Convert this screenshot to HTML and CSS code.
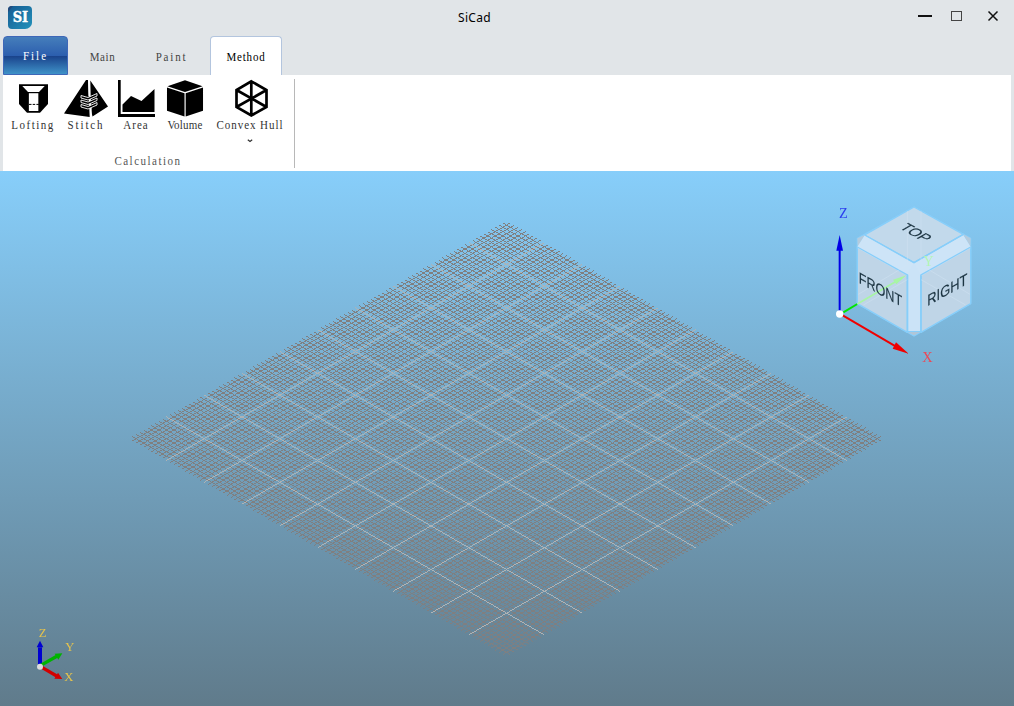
FILE: index.html
```html
<!DOCTYPE html>
<html lang="en">
<head>
<meta charset="utf-8">
<title>SiCad</title>
<link rel="stylesheet" href="styles.css">
</head>
<body>
<div class="window">
  <header class="titlebar">
    <svg class="logo" viewBox="0 0 24 23">
      <defs>
        <linearGradient id="lg" x1="0" y1="0" x2="1" y2="1"><stop offset="0" stop-color="#145a91"/><stop offset="1" stop-color="#2392bb"/></linearGradient>
      </defs>
      <path d="M4 0H20Q24 0 24 4V17Q24 19 22 21Q20 23 17 23H4Q0 23 0 19V4Q0 0 4 0Z" fill="url(#lg)"/>
      <path d="M0 6V4Q0 0 4 0H5Z" fill="#234a7c"/>
      <text x="12.4" y="16.4" text-anchor="middle" class="logo-text" textLength="15.5" lengthAdjust="spacingAndGlyphs">SI</text>
    </svg>
    <div class="title">SiCad</div>
    <svg class="controls" viewBox="0 0 90 20">
      <path d="M3 8H17" stroke="#111" stroke-width="2"/>
      <rect x="36.5" y="3.5" width="10" height="9" fill="none" stroke="#444"/>
      <path d="M73.5 3.5L82.5 12.5M82.5 3.5L73.5 12.5" stroke="#111" stroke-width="1.5"/>
    </svg>
  </header>
  <nav class="tabs">
    <div class="tab file"><span class="px sp-file">File</span></div>
    <div class="tab"><span class="px sp-main">Main</span></div>
    <div class="tab"><span class="px sp-paint">Paint</span></div>
    <div class="tab active"><span class="px sp-method">Method</span></div>
  </nav>
  <section class="ribbon">
    <div class="group">
      <div class="tools">
        <div class="tool">
          <svg class="icon" viewBox="14 79 38 39">
            <path d="M19 84.3H48V104L40 112.8H27L19 104Z"/>
            <path d="M22.3 86H44.7L39 92H28Z" fill="#fff"/>
            <path d="M28.8 93.2H38.5V111H28.8Z" fill="#fff"/>
            <path d="M29 104.4H39" stroke="#000" stroke-dasharray="2.5 1.2"/>
            <path d="M27.8 92V111.5M39.2 92V111.5" stroke="#000"/>
          </svg><span class="px sp-lofting">Lofting</span>
        </div>
        <div class="tool">
          <svg class="icon stitch" viewBox="63 79 46 39">
            <path d="M86 80L64 113.5L89.7 117L88 80ZM90.3 80.5L108 106.5L92.5 116.5L91 110Z"/>
            <path d="M88.9 80L89.2 96M91 108L90.8 117" stroke="#fff" stroke-width="1.4"/>
            <path d="M81 95.5L88 97.5L97 93.5V96L88 100L81 98ZM81 100L88 102L97 98V100.5L88 104.5L81 102.5ZM81 104.5L88 106.5L97 102.5V105L88 109L81 107Z" fill="#000" stroke="#fff" stroke-width=".9"/>
          </svg><span class="px sp-stitch">Stitch</span>
        </div>
        <div class="tool">
          <svg class="icon area" viewBox="117 79 38 39">
            <path d="M118 80H120.7V114H155V117H118ZM122.5 112V104.5L131 96L141.5 101L154.5 89V112Z"/>
          </svg><span class="px sp-area">Area</span>
        </div>
        <div class="tool">
          <svg class="icon" viewBox="167 79 39 39">
            <path d="M186.5 79.8L204.5 86L186.5 91.8L168.5 86ZM168 87.3L186 93V117L168 111ZM205 87.3L187.2 93V117L205 111Z"/>
          </svg><span class="px sp-volume">Volume</span>
        </div>
        <div class="tool">
          <svg class="icon hull" viewBox="232 79 38 39">
            <path d="M251.3 81.3L266.5 90V107L251.3 115.5L236.5 107V90ZM251.3 81.3V115.5M236.5 90L266.5 107M266.5 90L236.5 107" fill="none" stroke="#000" stroke-width="2.7"/>
          </svg><span class="px sp-hull">Convex Hull</span>
          <svg class="caret" viewBox="0 0 6 4"><path d="M.8 .8L3 2.5L5.2 .8" fill="none" stroke="#333" stroke-width="1.2"/></svg>
        </div>
      </div>
      <div class="group-name"><span class="px sp-calc">Calculation</span></div>
    </div>
  </section>
  <main class="view">
    <canvas class="grid" id="grid" width="1014" height="535"></canvas>
    <svg class="cube" viewBox="0 0 465 525">
      <g stroke="#87cefa" stroke-width="4" stroke-linejoin="round">
        <path d="M267 36L437 130V325L267 423L97 325V130Z" fill="#b4cde2"/>
        <path d="M119 120L267 203L415 118L436 155L288 240V410H248V240L98 155Z" fill="#cbe3f7"/>
        <path d="M267 36L415 118L267 203L119 120Z" fill="#c2d9eb"/>
        <path d="M97 156L247 240V412L97 326Z" fill="#bfd5e7"/>
        <path d="M437 156L288 240V412L437 326Z" fill="#bfd5e7"/>
      </g>
      <path d="M119 120L98 155L97 130ZM415 118L436 155L437 130Z" fill="#b4cbdd"/>
      <path d="M119 121L98 154V160L248 243V235L267 205ZM415 120L436 154V160L288 243L267 205Z" fill="#cde4f7"/>
      <path d="M119 120L267 203L415 118M97 156L247 240V412M437 156L288 240V412" fill="none" stroke="#87cefa" stroke-width="4"/>
      <path d="M249 411H286L267 421Z" fill="#b0c6d8"/>
      <g fill="none" stroke="#d2e5f3" stroke-width="3" opacity=".45">
        <path d="M247 48V210L100 298M288 48V210L435 298M247 254L115 330M288 254L422 330M247 120L267 110L288 120"/>
      </g>
      <path d="M55 352L97 327" stroke="#00e600" stroke-width="6"/>
      <path d="M97 327L215 258" stroke="#a8f5a4" stroke-width="5"/>
      <path d="M244 241L204 254L214 268Z" fill="#a8f5a4"/>
      <text x="295" y="213" class="axis" fill="#b3f5b4">Y</text>
      <g class="face">
        <text transform="matrix(.87 .49 -.84 .49 221 99)" textLength="88" lengthAdjust="spacingAndGlyphs">TOP</text>
        <text transform="matrix(.87 .49 0 1 101 263)" textLength="150" lengthAdjust="spacingAndGlyphs">FRONT</text>
        <text transform="matrix(.87 -.49 0 1 307 334)" textLength="138" lengthAdjust="spacingAndGlyphs">RIGHT</text>
      </g>
      <path d="M44 352V160" stroke="#0000e6" stroke-width="6"/>
      <path d="M44 120L54 167H34Z" fill="#0000e6"/>
      <path d="M48 358L212 454" stroke="#f00000" stroke-width="6"/>
      <path d="M251 476L203 461L213 442Z" fill="#f00000"/>
      <circle cx="44" cy="357" r="11" fill="#fff"/>
      <text x="42" y="68" class="axis" fill="#2c3fee">Z</text>
      <text x="292" y="501" class="axis" fill="#ef4654">X</text>
    </svg>
    <svg class="triad" viewBox="0 0 210 210">
      <path d="M60 138V82" stroke="#0000d2" stroke-width="12"/><path d="M60 62L70 82H50Z" fill="#0000d2"/>
      <path d="M62 136L112 108" stroke="#00b400" stroke-width="10"/><path d="M127 100L115 119L104 101Z" fill="#00b400"/>
      <path d="M62 140L110 168" stroke="#d20000" stroke-width="10"/><path d="M127 177L103 176L114 158Z" fill="#d20000"/>
      <circle cx="60" cy="140" r="9" fill="#ddd"/>
      <g class="letters"><text x="56" y="50">Z</text><text x="136" y="92">Y</text><text x="133" y="182">X</text></g>
    </svg>
  </main>
</div>
<script src="grid.js"></script>
</body>
</html>
```
FILE: styles.css
```css
* { box-sizing: border-box; }
body { margin: 0; overflow: hidden; background: #e1e5e8; }
.window { width: 1014px; height: 706px; display: flex; flex-direction: column; }
.titlebar { height: 36px; display: flex; padding: 6px 9px 0 8px; }
.logo { width: 24px; height: 23px; }
.logo-text { font: bold 14px "DejaVu Serif", serif; fill: #fff; stroke: #fff; stroke-width: .4px; }
.title { font: 12px/23px "Noto Sans", sans-serif; color: #000; margin-left: 426px; letter-spacing: .3px; }
.controls { width: 90px; height: 20px; margin: 2px 0 0 auto; }
.px { display: inline-block; font: 11px/12px "Liberation Serif", serif; transform: scaleY(1.08); white-space: pre; }
.sp-file { letter-spacing: 2px; }
.sp-main { letter-spacing: .6px; }
.sp-paint { letter-spacing: 1.8px; }
.sp-method { letter-spacing: .8px; }
.sp-lofting { letter-spacing: 1.5px; }
.sp-stitch { letter-spacing: 1.9px; }
.sp-area { letter-spacing: 1px; }
.sp-volume { letter-spacing: .2px; }
.sp-hull { letter-spacing: .95px; }
.sp-calc { letter-spacing: 1.5px; }
.tabs { height: 39px; display: flex; padding: 0 3px; }
.tab { width: 69px; height: 39px; display: flex; align-items: center; justify-content: center; color: #444; padding-top: 2px; }
.tab.file { width: 65px; padding-top: 0; color: #fff; border: 1px solid #3e67b8; border-radius: 4px 4px 0 0; background: linear-gradient(#457ebb 0, #2c5eae 51%, #1a438c 52%, #3f92c8 100%); }
.tab.active { width: 72px; margin-left: 4px; color: #000; background: #fff; border: 1px solid #b3c5de; border-bottom: 0; border-radius: 4px 4px 0 0; }
.ribbon { height: 96px; margin: 0 3px; background: #fff; display: flex; padding: 4px 0 3px 5px; }
.group { width: 287px; border-right: 1px solid #b8b8b8; color: #333; display: flex; flex-direction: column; }
.tools { display: grid; grid-template-columns: 50px 56px 44px 54px 76px; height: 76px; }
.tool { display: flex; flex-direction: column; align-items: center; }
.icon { width: 38px; height: 39px; margin-bottom: 1px; }
.stitch { width: 46px; }
.hull { margin-left: 1px; }
.caret { width: 6px; height: 4px; margin-top: 8px; }
.group-name { text-align: center; line-height: 12px; color: #555; margin-right: 6px; }
.group-name .px { vertical-align: top; }
.view { height: 535px; position: relative; background: linear-gradient(#87cefa, #607b8b); }
.grid { display: block; }
.cube { position: absolute; left: 825px; top: 24px; width: 155px; height: 175px; }
.axis { font: 43px "Liberation Serif", serif; }
.face { font: 47px "Liberation Sans", sans-serif; fill: #1c3442; stroke: #1c3442; stroke-width: .5px; }
.triad { position: absolute; left: 20px; top: 449px; width: 70px; height: 70px; }
.letters { font: 38px "Liberation Serif", serif; fill: #e6c34c; }
```
FILE: grid.js
```js
const ctx = document.getElementById('grid').getContext('2d');
const cx = 506.6, cy = 267.7, dx = 37.8, dy = 21.8;

// Isometric lines are plotted pixel by pixel, without antialiasing.
function line(u1, v1, u2, v2) {
  const x1 = cx + (u1 - v1) * dx, y1 = cy + (u1 + v1) * dy;
  const x2 = cx + (u2 - v2) * dx, y2 = cy + (u2 + v2) * dy;
  const slope = (y2 - y1) / (x2 - x1);
  const end = Math.floor(Math.max(x1, x2) - 0.5);
  for (let x = Math.ceil(Math.min(x1, x2) - 0.5); x <= end; x++) {
    ctx.fillRect(x, Math.floor(y1 + (x + 0.5 - x1) * slope), 1, 1);
  }
}

function lines(count, step, color) {
  ctx.fillStyle = color;
  for (let i = -count; i <= count; i++) {
    line(i * step, -5, i * step, 5);
    line(-5, i * step, 5, i * step);
  }
}

lines(49, 0.1, '#807f80');
lines(4, 1, '#b0b2b3');
```
